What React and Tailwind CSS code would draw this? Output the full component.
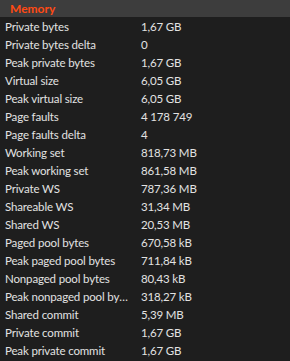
import React from 'react';

const rows = [
  ['Private bytes', '1,67 GB'],
  ['Private bytes delta', '0'],
  ['Peak private bytes', '1,67 GB'],
  ['Virtual size', '6,05 GB'],
  ['Peak virtual size', '6,05 GB'],
  ['Page faults', '4 178 749'],
  ['Page faults delta', '4'],
  ['Working set', '818,73 MB'],
  ['Peak working set', '861,58 MB'],
  ['Private WS', '787,36 MB'],
  ['Shareable WS', '31,34 MB'],
  ['Shared WS', '20,53 MB'],
  ['Paged pool bytes', '670,58 kB'],
  ['Peak paged pool bytes', '711,84 kB'],
  ['Nonpaged pool bytes', '80,43 kB'],
  ['Peak nonpaged pool bytes', '318,27 kB'],
  ['Shared commit', '5,39 MB'],
  ['Private commit', '1,67 GB'],
  ['Peak private commit', '1,67 GB'],
];

const App = () => {
  return (
    <div className="w-[290px] h-[361px] overflow-hidden bg-[#1e1e1e] text-[11.5px] tracking-[-0.15px] text-[#e2e2e2] font-['Lato',sans-serif]">
      <div className="h-[17px] bg-[#3d3d3d] pl-[10px] flex items-center">
        <span className="font-bold text-[12px] tracking-normal text-[#ff4a14] leading-none">Memory</span>
      </div>
      <div className="pt-[1px]">
        {rows.map(([label, value]) => (
          <div key={label} className="h-[18px] flex items-center">
            <div className="w-[141px] shrink-0 pl-[5px] pr-[12px] truncate leading-[18px]">{label}</div>
            <div className="leading-[18px]">{value}</div>
          </div>
        ))}
      </div>
    </div>
  );
};

export default App;
